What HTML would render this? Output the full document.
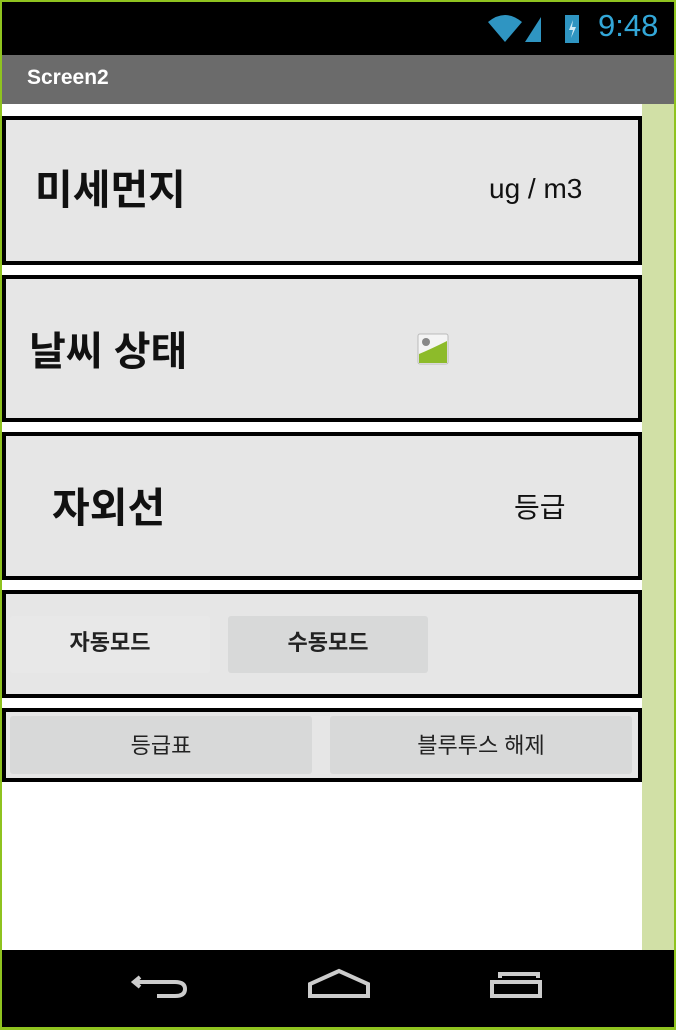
<!DOCTYPE html>
<html><head><meta charset="utf-8"><style>
*{margin:0;padding:0;box-sizing:border-box}
body{width:676px;height:1030px;overflow:hidden;background:#8fc31f;position:relative;font-family:"Liberation Sans","Noto Sans CJK KR",sans-serif}
.abs{position:absolute}
.box{position:absolute;left:2px;width:640px;border:4px solid #000;background:#e6e6e6}
.t{position:absolute;font-weight:bold;color:#111}
.btn{position:absolute;background:#d8d9d9;border-radius:3px;text-align:center;font-size:22px;color:#222}
</style></head><body>
<div class="abs" style="left:2px;top:2px;width:672px;height:53px;background:#000"></div>
<div class="abs" style="left:598px;top:8px;font-size:31px;color:#33a7d8;font-family:'Liberation Sans',sans-serif">9:48</div>
<svg class="abs" style="left:485px;top:12px" width="100" height="32">
<path d="M3 10 Q20 -4 37 10 L20 30 Z" fill="#2f95c2"/>
<path d="M40 30 L56 30 L56 5 Z" fill="#2f95c2"/>
<rect x="80" y="3" width="14" height="28" fill="#2f95c2"/>
<path d="M88 8 L84 18 L88 18 L86 26 L91 15 L87 15 Z" fill="#cfeaf6"/>
</svg>
<div class="abs" style="left:2px;top:55px;width:672px;height:49px;background:#6b6b6b"></div>
<div class="abs" style="left:27px;top:66px;font-size:21px;color:#fff;font-weight:bold">Screen2</div>
<div class="abs" style="left:2px;top:104px;width:640px;height:846px;background:#fff"></div>
<div class="abs" style="left:642px;top:104px;width:32px;height:846px;background:#d1e0a6"></div>
<div class="abs" style="left:2px;top:950px;width:672px;height:77px;background:#000"></div>
<svg class="abs" style="left:120px;top:960px" width="440" height="60" stroke="#ccc" stroke-width="4" fill="none">
<path d="M20 17 L14 22 L20 27 M14 22 L55 22 Q65 22 65 29 Q65 36 55 36 L37 36"/>
<path d="M190 36 L190 24 L219 11 L248 24 L248 36 Z"/>
<path d="M372 22 L420 22 L420 36 L372 36 Z M380 18 L380 14 L418 14 L418 18"/>
</svg>
<div class="box" style="top:116px;height:149px"><div class="t" style="left:29px;top:36px;font-size:41px">미세먼지</div><div class="abs" style="left:483px;top:53px;font-size:28px;color:#111">ug / m3</div></div>
<div class="box" style="top:275px;height:147px"><div class="t" style="left:23px;top:40px;font-size:40px">날씨 상태</div>
<svg class="abs" style="left:411px;top:54px" width="32" height="32"><rect x="1" y="1" width="30" height="30" rx="2" fill="#f4f4f4" stroke="#bbb"/><circle cx="9" cy="9" r="4" fill="#888"/><path d="M2 21 Q14 16 30 8 L30 30 L2 30Z" fill="#8dbb2a"/></svg></div>
<div class="box" style="top:432px;height:148px"><div class="t" style="left:46px;top:38px;font-size:41px">자외선</div><div class="abs" style="left:508px;top:50px;font-size:28px;color:#111">등급</div></div>
<div class="box" style="top:590px;height:108px">
<div class="btn" style="left:4px;top:22px;width:200px;height:57px;line-height:54px;background:#e8e8e8;font-weight:bold">자동모드</div>
<div class="btn" style="left:222px;top:22px;width:200px;height:57px;line-height:54px;font-weight:bold">수동모드</div></div>
<div class="box" style="top:708px;height:74px">
<div class="btn" style="left:4px;top:4px;width:302px;height:58px;line-height:60px">등급표</div>
<div class="btn" style="left:324px;top:4px;width:302px;height:58px;line-height:60px">블루투스 해제</div></div>
</body></html>
